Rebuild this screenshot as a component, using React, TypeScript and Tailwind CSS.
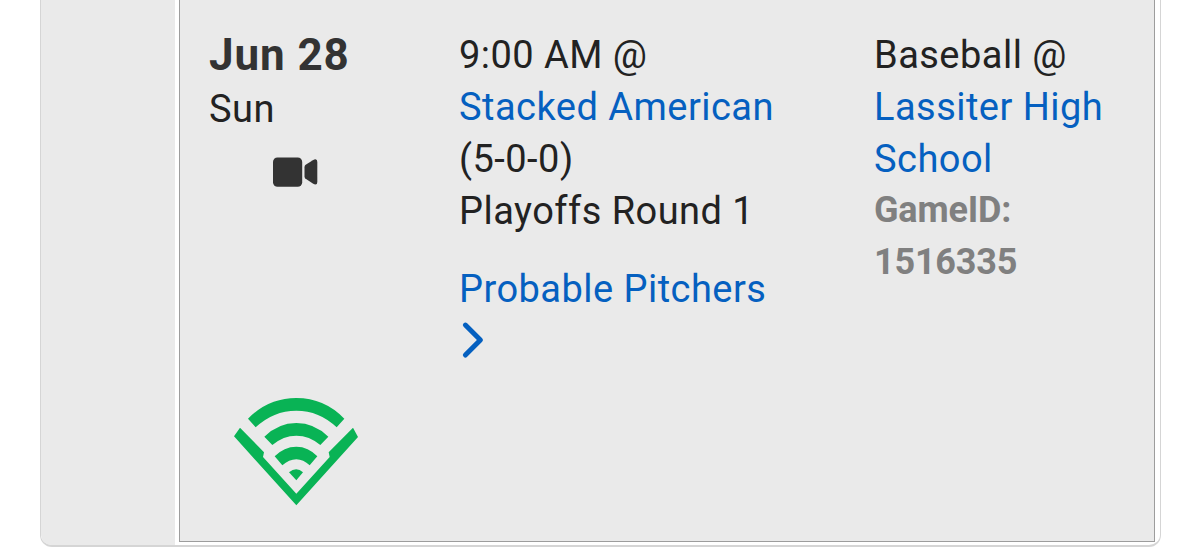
function VideoIcon() {
  return (
    <svg className="block h-[30px] w-[45px]" viewBox="0 0 45 30" fill="#333333">
      <rect x="0" y="0.5" width="29.2" height="29.3" rx="4.5" />
      <path d="M31.5 10.2Q31.5 9 32.3 8L39.8 3.2Q44.3 0.8 44.3 4.9V25Q44.3 29 39.8 26.6L32.3 21.6Q31.5 20.6 31.5 19.6Z" />
    </svg>
  );
}

function DiamondSignalIcon() {
  return (
    <svg className="block h-[130px] w-[150px]" viewBox="0 0 450 390" fill="#09b355">
      <path d="M84 101Q145 39 229 39Q313 39 373 101L350 127Q298 77 229 77Q160 77 107 127Z" />
      <path d="M133 155Q175 114 229 114Q283 114 325 155L301 180Q268 152 229 152Q190 152 157 180Z" />
      <path d="M164 214Q192 185 229 185Q265 185 292 214L269 241Q250 223 229 223Q207 223 187 241Z" />
      <path d="M207 262Q229 244 249 262L229 286Z" />
      <path d="M42 154L60 128L132 202L129 216L229 326L329 216L326 202L399 128L414 156L229 361Z" />
    </svg>
  );
}

export default function App() {
  return (
    <div className="h-[557px] overflow-hidden bg-white px-10 font-['Roboto',sans-serif] text-[38px] leading-[52px] tracking-[0.47px] text-[#222222]">
      <div className="flex h-[547px] w-[1121px] rounded-b-[12px] border-x border-b-2 border-[#d5d5d5] bg-white">
        <div className="w-[134px] rounded-bl-[10px] bg-[#eaeaea]" />
        <div className="ml-1 flex h-[542px] w-[976px] border-x border-b border-[#9d9d9d] bg-[#eaeaea] pl-[29px] pt-7">
          <div className="w-[250px] pt-px">
            <div className="text-[44px] font-bold tracking-[0.9px] text-[#333333]">Jun 28</div>
            <div className="mt-[2px]">Sun</div>
            <div className="ml-16 mt-[22px]"><VideoIcon /></div>
            <div className="ml-[11px] mt-[198px]"><DiamondSignalIcon /></div>
          </div>
          <div className="w-[415px] whitespace-nowrap pt-px">
            <div>9:00 AM @</div>
            <div className="text-[#0560c0]">Stacked American</div>
            <div>(5-0-0)</div>
            <div>Playoffs Round 1</div>
            <div className="mt-[26px] text-[#0560c0]">Probable Pitchers</div>
            <svg className="mt-[6px] block h-[38px] w-[28px]" viewBox="0 0 28 38" fill="none" stroke="#0560c0" strokeWidth="5" strokeLinecap="round" strokeLinejoin="round">
              <path d="M6.4 4.1L21.4 19L6.4 34" />
            </svg>
          </div>
          <div className="whitespace-nowrap pt-px">
            <div>Baseball @</div>
            <div className="text-[#0560c0]">Lassiter High</div>
            <div className="text-[#0560c0]">School</div>
            <div className="-mt-px text-[36px] font-bold tracking-[-0.2px] text-[#808080]">GameID:</div>
            <div className="text-[36px] font-bold tracking-[-0.2px] text-[#808080]">1516335</div>
          </div>
        </div>
      </div>
    </div>
  );
}
